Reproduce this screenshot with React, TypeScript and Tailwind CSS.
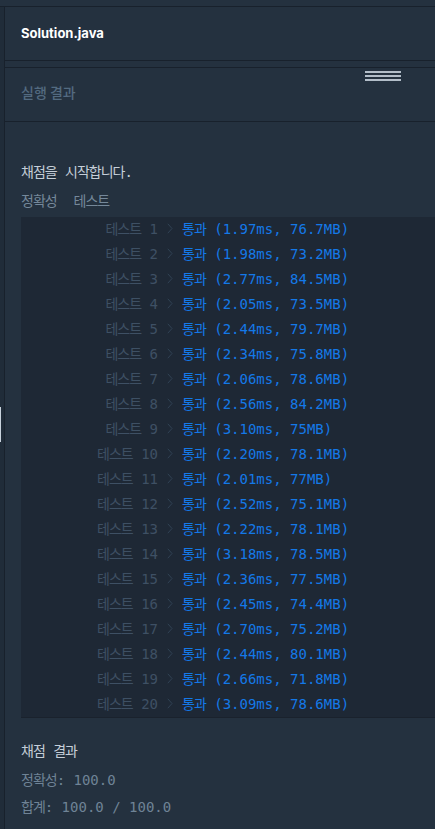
import React from "react";

const rows: [number, string, string][] = [
  [1, "1.97ms", "76.7MB"],
  [2, "1.98ms", "73.2MB"],
  [3, "2.77ms", "84.5MB"],
  [4, "2.05ms", "73.5MB"],
  [5, "2.44ms", "79.7MB"],
  [6, "2.34ms", "75.8MB"],
  [7, "2.06ms", "78.6MB"],
  [8, "2.56ms", "84.2MB"],
  [9, "3.10ms", "75MB"],
  [10, "2.20ms", "78.1MB"],
  [11, "2.01ms", "77MB"],
  [12, "2.52ms", "75.1MB"],
  [13, "2.22ms", "78.1MB"],
  [14, "3.18ms", "78.5MB"],
  [15, "2.36ms", "77.5MB"],
  [16, "2.45ms", "74.4MB"],
  [17, "2.70ms", "75.2MB"],
  [18, "2.44ms", "80.1MB"],
  [19, "2.66ms", "71.8MB"],
  [20, "3.09ms", "78.6MB"],
];

function K({ children }: { children: React.ReactNode }) {
  return (
    <span className="font-['Noto_Sans_CJK_KR',sans-serif] text-[14px] tracking-[-1px]">
      {children}
    </span>
  );
}

export default function App() {
  return (
    <div className="relative h-[829px] w-[435px] overflow-hidden bg-[#24313f]">
      <div className="h-[6px] border-b border-[#18212c] box-content" />
      <div className="flex h-full">
        <div className="w-[4px] shrink-0 bg-[#202c39] border-r border-[#18212c] box-content" />
        <div className="flex-1 flex flex-col">
          <div className="h-[53px] flex items-center pl-[16px] border-b border-[#18212c] box-content">
            <span className="font-['Inter',sans-serif] font-bold text-[13px] text-white">
              Solution.java
            </span>
          </div>
          <div className="h-[6px] border-b border-[#18212c] box-content" />
          <div className="relative h-[48px] flex items-center pl-[16px] pb-[5px] border-b border-[#18212c] box-content">
            <span className="font-['Noto_Sans_CJK_KR',sans-serif] font-medium text-[14px] text-[#536a80]">
              실행 결과
            </span>
            <div className="absolute left-[360px] top-[3px] flex flex-col gap-[2px]">
              <div className="h-[2px] w-[36px] bg-[#b3bec9]" />
              <div className="h-[2px] w-[36px] bg-[#b3bec9]" />
              <div className="h-[2px] w-[36px] bg-[#b3bec9]" />
            </div>
          </div>
          <div className="pl-[16px] pt-[35px] font-['DejaVu_Sans_Mono','Noto_Sans_CJK_KR',monospace] text-[14px]">
            <div className="leading-[28px] text-[#c5ced8] whitespace-pre">
              <K>채점을</K> <K>시작합니다</K>.
            </div>
            <div className="leading-[28px] text-[#75889a] whitespace-pre">
              <K>정확성</K>{"  "}<K>테스트</K>
            </div>
            <div className="mt-[2px] w-[440px] bg-[#1e2835] border-b border-[#1a222d]">
              {rows.map(([n, ms, mb]) => (
                <div key={n} className="flex h-[25px] items-center pb-[3px] leading-[22px] whitespace-pre">
                  <div className="w-[137px] text-right text-[#3e5064]">
                    <K>테스트</K> {n}
                  </div>
                  <div className="w-[24px] flex justify-center">
                    <svg width="6" height="11" viewBox="0 0 6 11" fill="none">
                      <path d="M0.8 0.8 L5 5.5 L0.8 10.2" stroke="#314254" strokeWidth="1" />
                    </svg>
                  </div>
                  <div className="text-[#1479e8]">
                    <K>통과</K> ({ms}, {mb})
                  </div>
                </div>
              ))}
            </div>
            <div className="mt-[19px] leading-[26px] text-[#c5ced8] whitespace-pre">
              <K>채점</K> <K>결과</K>
            </div>
            <div className="mt-[2px] leading-[26px] text-[#6f8396] whitespace-pre">
              <K>정확성</K>: 100.0
            </div>
            <div className="leading-[26px] text-[#6f8396] whitespace-pre">
              <K>합계</K>: 100.0 / 100.0
            </div>
          </div>
        </div>
      </div>
      <div className="absolute left-0 top-[407px] h-[35px] w-[1px] bg-[#c8d2dc]" />
    </div>
  );
}
